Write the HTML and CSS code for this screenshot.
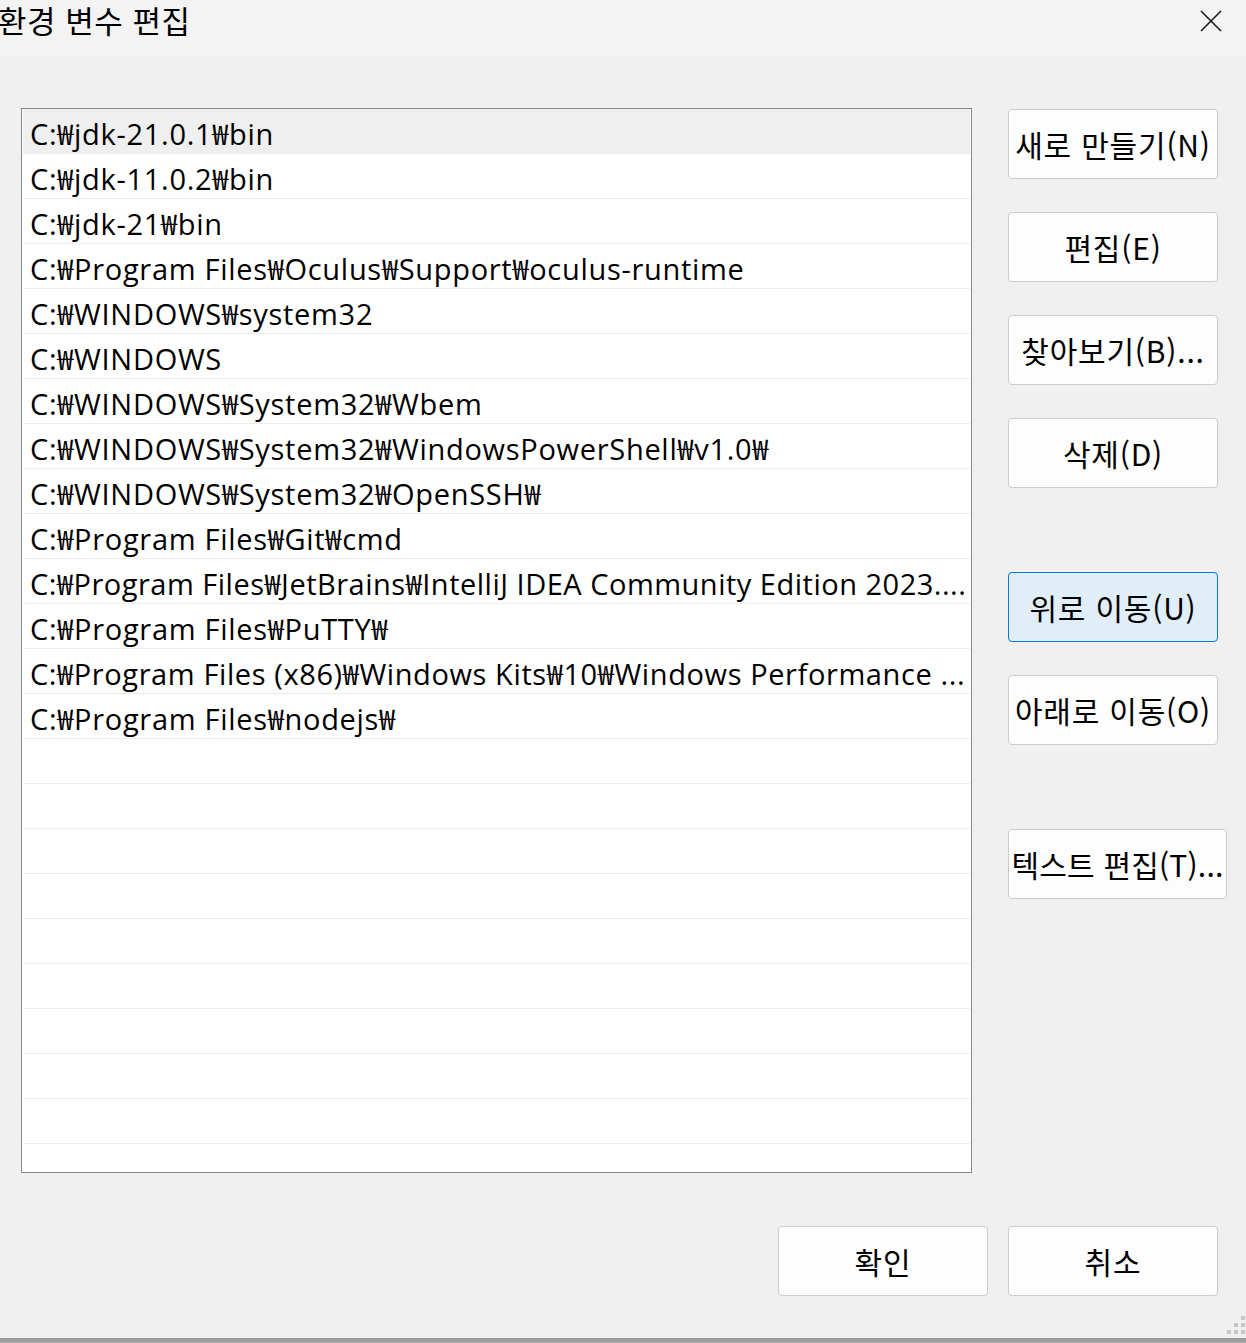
FILE: index.html
```html
<!DOCTYPE html>
<html lang="ko">
<head>
<meta charset="utf-8">
<title>환경 변수 편집</title>
<link rel="stylesheet" href="styles.css">
</head>
<body>
<div class="window">
  <header class="titlebar">
    <h1 class="title">환경 변수 편집</h1>
    <button class="close" aria-label="닫기">
      <svg width="22" height="22" viewBox="0 0 22 22"><path d="M1 1 L21 21 M21 1 L1 21" stroke="#1b1b1b" stroke-width="1.6" fill="none"/></svg>
    </button>
  </header>
  <main class="content">
    <div class="main-row">
      <div class="list">
        <div class="row selected">C:₩jdk-21.0.1₩bin</div>
        <div class="row">C:₩jdk-11.0.2₩bin</div>
        <div class="row">C:₩jdk-21₩bin</div>
        <div class="row">C:₩Program Files₩Oculus₩Support₩oculus-runtime</div>
        <div class="row">C:₩WINDOWS₩system32</div>
        <div class="row">C:₩WINDOWS</div>
        <div class="row">C:₩WINDOWS₩System32₩Wbem</div>
        <div class="row">C:₩WINDOWS₩System32₩WindowsPowerShell₩v1.0₩</div>
        <div class="row">C:₩WINDOWS₩System32₩OpenSSH₩</div>
        <div class="row">C:₩Program Files₩Git₩cmd</div>
        <div class="row tight">C:₩Program Files₩JetBrains₩IntelliJ IDEA Community Edition 2023....</div>
        <div class="row">C:₩Program Files₩PuTTY₩</div>
        <div class="row tight wider">C:₩Program Files (x86)₩Windows Kits₩10₩Windows Performance ...</div>
        <div class="row">C:₩Program Files₩nodejs₩</div>
        <div class="row"></div>
        <div class="row"></div>
        <div class="row"></div>
        <div class="row"></div>
        <div class="row"></div>
        <div class="row"></div>
        <div class="row"></div>
        <div class="row"></div>
        <div class="row"></div>
        <div class="row last"></div>
      </div>
      <div class="actions">
        <button class="btn">새로 만들기(N)</button>
        <button class="btn gap-s">편집(E)</button>
        <button class="btn gap-s">찾아보기(B)...</button>
        <button class="btn gap-s">삭제(D)</button>
        <button class="btn gap-l primary">위로 이동(U)</button>
        <button class="btn gap-s">아래로 이동(O)</button>
        <button class="btn gap-l wide">텍스트 편집(T)...</button>
      </div>
    </div>
    <div class="footer">
      <button class="btn">확인</button>
      <button class="btn">취소</button>
    </div>
  </main>
  <div class="bottom-edge"></div>
  <svg class="grip" width="20" height="20" viewBox="0 0 20 20">
    <g fill="#c6c6c6">
      <rect x="15" y="1" width="4" height="4"/>
      <rect x="8" y="8" width="4" height="4"/>
      <rect x="15" y="8" width="4" height="4"/>
      <rect x="1" y="15" width="4" height="4"/>
      <rect x="8" y="15" width="4" height="4"/>
      <rect x="15" y="15" width="4" height="4"/>
    </g>
  </svg>
</div>
</body>
</html>
```

FILE: styles.css
```css
* { box-sizing: border-box; }
html, body {
  margin: 0;
  padding: 0;
  background: #f0f0f0;
  font-family: "Open Sans", "Noto Sans CJK KR", sans-serif;
  color: #000;
}
.window {
  position: relative;
  width: 1246px;
  height: 1343px;
  overflow: hidden;
}
.titlebar {
  height: 57px;
  background: #f3f3f3;
  display: flex;
  align-items: flex-start;
  justify-content: space-between;
}
.title {
  margin: 0 0 0 -2px;
  font-family: "Noto Sans CJK KR", sans-serif;
  font-weight: 400;
  font-size: 31px;
  line-height: 40px;
  letter-spacing: 0.5px;
  white-space: nowrap;
}
.close {
  border: 0;
  background: transparent;
  padding: 0;
  margin: 10px 24px 0 0;
  width: 22px;
  height: 22px;
  display: flex;
}
.content {
  padding: 51px 0 0 21px;
  height: 1281px;
}
.main-row {
  display: flex;
  align-items: flex-start;
  gap: 36px;
}
.list {
  width: 951px;
  height: 1065px;
  border: 1px solid #828790;
  background: #fff;
  overflow: hidden;
  padding: 0 1px;
}
.row {
  height: 45px;
  border-bottom: 1px solid #ececec;
  padding: 5px 0 0 7px;
  font-size: 29px;
  line-height: 39px;
  letter-spacing: 0.7px;
  white-space: nowrap;
  overflow: hidden;
}
.row.tight {
  letter-spacing: 0.5px;
}
.row.tight.wider {
  letter-spacing: 0.6px;
}
.row.selected {
  background: #efefef;
  border-bottom-color: #efefef;
}
.actions {
  display: flex;
  flex-direction: column;
  align-items: flex-start;
  padding-top: 1px;
}
.btn {
  width: 210px;
  height: 70px;
  border: 1px solid #cccccc;
  border-radius: 4px;
  background: #fdfdfd;
  font-family: "Noto Sans CJK KR", sans-serif;
  font-size: 30px;
  letter-spacing: 0.8px;
  color: #000;
  padding: 0;
  white-space: nowrap;
  display: flex;
  align-items: center;
  justify-content: center;
  line-height: 1;
}
.btn.gap-s { margin-top: 33px; }
.btn.gap-l { margin-top: 84px; }
.btn.wide { width: 219px; letter-spacing: 0.2px; }
.btn.primary {
  background: #e0eef9;
  border-color: #0078d4;
}
.footer {
  display: flex;
  justify-content: flex-end;
  gap: 20px;
  margin-top: 53px;
  padding-right: 28px;
}
.bottom-edge {
  height: 5px;
  background: linear-gradient(#999999, #a8a8a8);
}
.grip {
  position: absolute;
  right: 0;
  bottom: 8px;
}
```
